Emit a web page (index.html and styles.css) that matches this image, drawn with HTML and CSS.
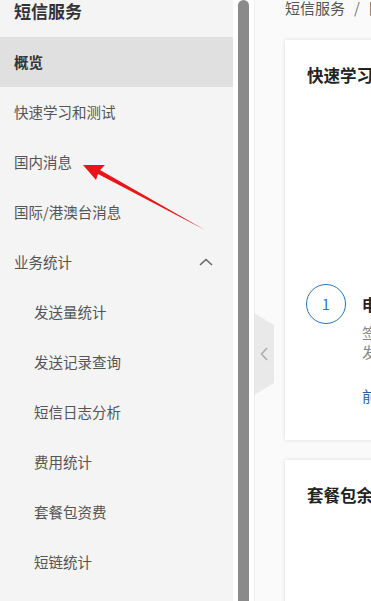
FILE: index.html
```html
<!DOCTYPE html>
<html lang="zh-CN">
<head>
  <meta charset="UTF-8">
  <title>短信服务 - 国内消息</title>
  <link rel="stylesheet" href="styles.css">
</head>
<body>
  <div class="page">
    <aside class="sidebar">
      <div class="side-title">短信服务</div>
      <ul class="menu">
        <li class="menu-item active">概览</li>
        <li class="menu-item">快速学习和测试</li>
        <li class="menu-item">国内消息</li>
        <li class="menu-item">国际/港澳台消息</li>
        <li class="menu-item group">
          <span>业务统计</span>
          <svg class="chev" width="14" height="8" viewBox="0 0 14 8"><path d="M1 7 L7 1.5 L13 7" fill="none" stroke="#666" stroke-width="1.6"/></svg>
        </li>
        <li class="menu-item sub">发送量统计</li>
        <li class="menu-item sub">发送记录查询</li>
        <li class="menu-item sub">短信日志分析</li>
        <li class="menu-item sub">费用统计</li>
        <li class="menu-item sub">套餐包资费</li>
        <li class="menu-item sub">短链统计</li>
      </ul>
    </aside>

    <div class="scroll-track"><div class="scroll-thumb"></div></div>

    <main class="main">
      <div class="crumbs">短信服务<span class="sep">/</span>国内消息</div>

      <section class="card first">
        <h2 class="card-title">快速学习和测试</h2>
        <div class="step">
          <div class="step-num">1</div>
          <div class="step-body">
            <div class="step-title">申请签名和模板</div>
            <p class="step-desc">签名和模板审核通过后即可<br>发送短信</p>
            <a class="step-link">前往申请</a>
          </div>
        </div>
      </section>

      <section class="card second">
        <h2 class="card-title">套餐包余量</h2>
      </section>
    </main>
  </div>

  <div class="collapse-handle">
    <svg width="8" height="14" viewBox="0 0 8 14"><path d="M7 1 L1.5 7 L7 13" fill="none" stroke="#aaa" stroke-width="1.5"/></svg>
  </div>

  <svg class="note-arrow" width="371" height="601" viewBox="0 0 371 601">
    <polygon points="83,165 105,165 100,170 205,230 98,174 96,180" fill="#e8161a"/>
  </svg>
</body>
</html>
```

FILE: styles.css
```css
body {
  margin: 0;
  font-family: "Noto Sans CJK SC", "Liberation Sans", sans-serif;
  background: #fafafa;
  color: #333;
  overflow: hidden;
}
.page {
  display: flex;
  height: 601px;
}
.sidebar {
  width: 233px;
  flex: none;
  background: #f4f4f4;
  overflow: hidden;
}
.side-title {
  height: 37px;
  line-height: 22px;
  padding-left: 14px;
  font-size: 17px;
  font-weight: bold;
  color: #333;
}
.menu {
  list-style: none;
  margin: 0;
  padding: 0;
}
.menu-item {
  height: 50px;
  line-height: 50px;
  padding-left: 14px;
  font-size: 14.5px;
  color: #555;
}
.menu-item.active {
  background: #e0e0e0;
  font-weight: bold;
  color: #333;
}
.menu-item.group {
  display: flex;
  justify-content: space-between;
  align-items: center;
  padding-right: 20px;
}
.menu-item.sub {
  padding-left: 34px;
}
.scroll-track {
  width: 21px;
  flex: none;
  background: #fff;
  padding-left: 5px;
  box-sizing: border-box;
}
.scroll-thumb {
  width: 11px;
  height: 100%;
  background: #8a8a8a;
  border-radius: 6px 6px 0 0;
}
.main {
  flex: 1;
  padding-left: 30px;
  overflow: hidden;
  border-left: 1px solid #f0f0f0;
}
.crumbs {
  height: 40px;
  line-height: 16px;
  font-size: 15px;
  color: #555;
  white-space: nowrap;
}
.crumbs .sep {
  margin: 0 9px;
  color: #777;
}
.card {
  background: #fff;
  box-shadow: 0 0 4px rgba(0, 0, 0, 0.12);
  padding: 24px 0 0 22px;
  width: 400px;
  box-sizing: border-box;
}
.card.first {
  height: 400px;
}
.card.second {
  margin-top: 20px;
  height: 200px;
}
.card-title {
  margin: 0;
  font-size: 16.5px;
  line-height: 22px;
  color: #222;
  white-space: nowrap;
}
.step {
  display: flex;
  margin-top: 198px;
  margin-left: -1px;
}
.step-num {
  width: 38px;
  height: 38px;
  border: 1px solid #2a74b9;
  border-radius: 50%;
  text-align: center;
  line-height: 38px;
  font-size: 14px;
  color: #2a74b9;
  flex: none;
}
.step-body {
  margin-left: 16px;
}
.step-title {
  font-size: 16px;
  font-weight: bold;
  line-height: 22px;
  margin-top: 9px;
  color: #222;
  white-space: nowrap;
}
.step-desc {
  margin: 8px 0 0;
  font-size: 14.5px;
  line-height: 19px;
  color: #888;
  white-space: nowrap;
}
.step-link {
  display: block;
  margin-top: 26px;
  font-size: 14.5px;
  line-height: 18px;
  color: #1a62ad;
}
.collapse-handle {
  position: absolute;
  left: 254px;
  top: 313px;
  width: 20px;
  height: 82px;
  background: #e9e9e9;
  clip-path: polygon(0 0, 100% 12px, 100% calc(100% - 12px), 0 100%);
  display: flex;
  align-items: center;
  justify-content: center;
}
.note-arrow {
  position: absolute;
  left: 0;
  top: 0;
}
```
